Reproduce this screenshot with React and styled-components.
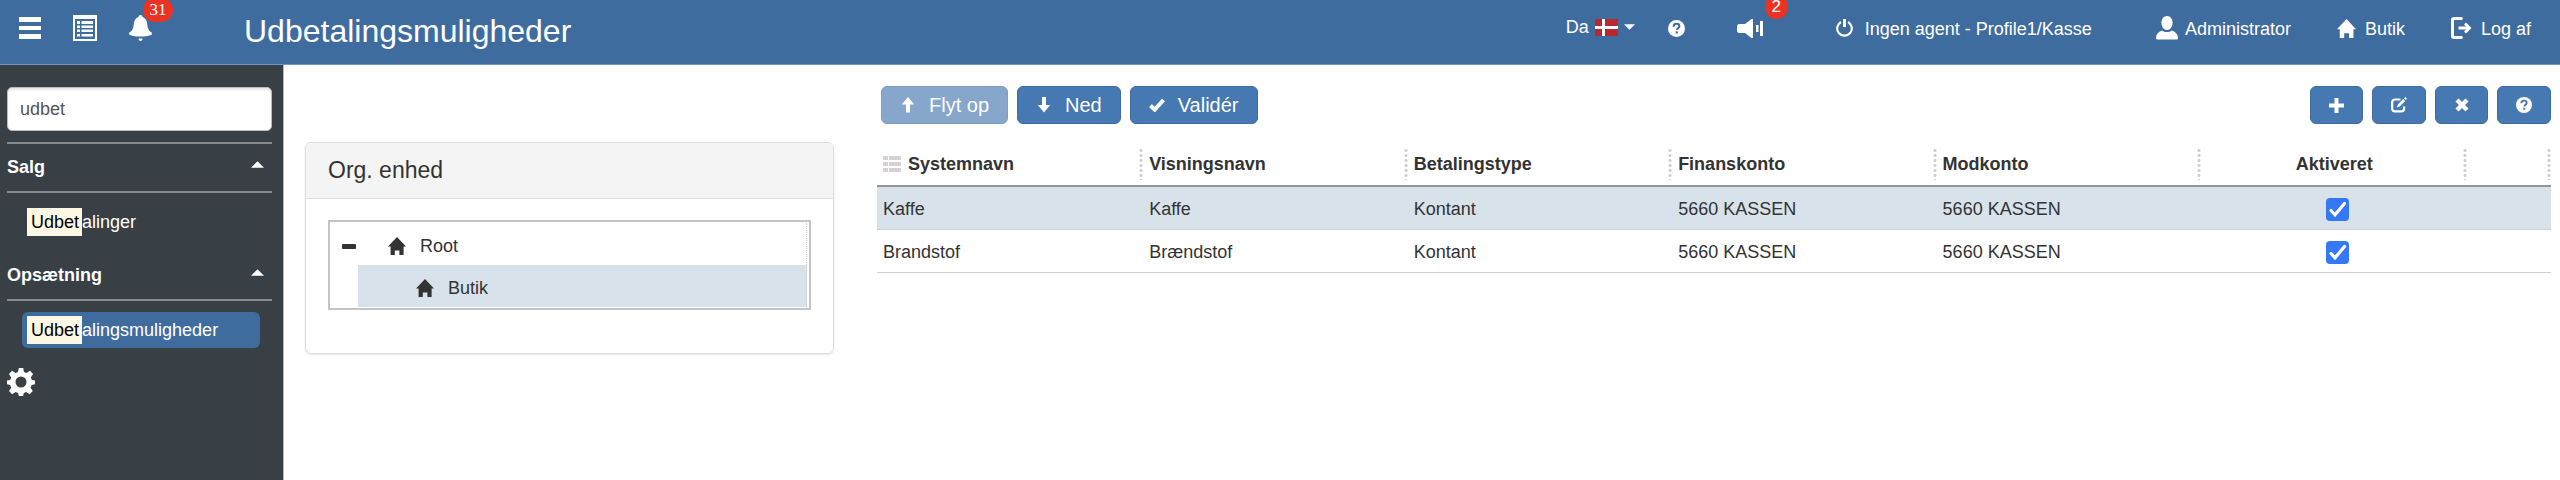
import React, { useState } from 'react';
import styled, { createGlobalStyle } from 'styled-components';

const GlobalStyle = createGlobalStyle`
  * {
    box-sizing: border-box;
  }

  body {
    margin: 0;
    background: #fff;
    color: #333;
    font-family: 'Liberation Sans', Arial, sans-serif;
    font-size: 18px;
    line-height: 24px;
  }

  button,
  input {
    font-family: inherit;
  }

  svg {
    display: block;
    flex: none;
  }
`;

const Page = styled.div`
  display: flex;
  flex-direction: column;
  min-height: 100vh;
`;

const Header = styled.header`
  display: flex;
  align-items: center;
  justify-content: space-between;
  height: 65px;
  padding: 0 29px 8px 19px;
  background: #3f6c9f;
  border-bottom: 1px solid #7297bd;
  color: #fff;
`;

const HeaderLeft = styled.div`
  display: flex;
  align-items: center;
`;

const Tools = styled.div`
  display: flex;
  align-items: center;
  gap: 32px;
  width: 225px;
`;

const IconButton = styled.button`
  position: relative;
  display: flex;
  align-items: center;
  padding: 0;
  border: 0;
  background: none;
  color: inherit;
  cursor: pointer;
`;

const Badge = styled.span`
  position: absolute;
  left: ${(props) => (props.$wide ? '14px' : '28px')};
  bottom: 19px;
  min-width: ${(props) => (props.$wide ? '30px' : '23px')};
  height: 24px;
  border-radius: 12px;
  background: #ea3323;
  font-family: ${(props) => (props.$wide ? "'Liberation Serif', serif" : 'inherit')};
  font-size: 17px;
  line-height: 24px;
  text-align: center;
`;

const Title = styled.h1`
  margin: 0;
  padding-top: 6px;
  font-size: 32px;
  font-weight: 400;
  line-height: 40px;
`;

const Nav = styled.nav`
  display: flex;
  align-items: center;
  gap: 46px;
`;

const NavGroup = styled.div`
  display: flex;
  align-items: center;
  gap: 52px;
  margin-right: 27px;
`;

const Language = styled.button`
  display: flex;
  align-items: center;
  gap: 6px;
  margin-right: -19px;
  padding: 0 0 2px;
  border: 0;
  background: none;
  color: inherit;
  font-size: 18px;
  line-height: 24px;
  cursor: pointer;
`;

const NavLink = styled.a`
  display: flex;
  align-items: center;
  gap: ${(props) => props.$gap || '9px'};
  margin-right: ${(props) => (props.$apart ? '18px' : '0')};
  color: inherit;
  text-decoration: none;

  span {
    padding-top: 2px;
  }
`;

const Body = styled.div`
  display: flex;
  flex: 1;
`;

const Sidebar = styled.aside`
  flex: none;
  width: 284px;
  padding: 22px 11px 22px 7px;
  background: #384045;
  border-right: 1px solid #b4b8ba;
  color: #fff;
`;

const Search = styled.input`
  display: block;
  width: 100%;
  height: 44px;
  margin-bottom: 11px;
  padding: 0 12px;
  border: 1px solid #bbb;
  border-radius: 5px;
  background: #fff;
  box-shadow: inset 0 2px 2px rgba(0, 0, 0, 0.1);
  color: #555;
  font-size: 18px;
`;

const MenuGroup = styled.section`
  & + & {
    margin-top: 11px;
  }
`;

const MenuHeading = styled.button`
  display: flex;
  align-items: center;
  justify-content: space-between;
  width: 100%;
  height: ${(props) => (props.$first ? '51px' : '50px')};
  padding: 0 8px 0 0;
  border: 0;
  border-top: ${(props) => (props.$first ? '2px solid #868a8c' : '0')};
  border-bottom: 2px solid #868a8c;
  background: none;
  color: #fff;
  font-size: 18px;
  font-weight: 700;
  cursor: pointer;

  svg {
    margin-bottom: 6px;
  }
`;

const MenuLink = styled.a`
  display: flex;
  align-items: center;
  height: 36px;
  margin: 11px 5px 0 15px;
  padding-left: 5px;
  border-radius: 6px;
  background: ${(props) => (props.$active ? '#3f6c9f' : 'transparent')};
  color: #fff;
  text-decoration: none;
`;

const MenuItems = styled.div`
  padding-right: 7px;
`;

const Match = styled.mark`
  padding: 2px 3px 2px 4px;
  background: #fcf8e3;
  color: #000;
`;

const Settings = styled(IconButton)`
  margin-top: 20px;
`;

const Main = styled.main`
  display: flex;
  flex: 1;
  align-items: flex-start;
  gap: 43px;
  min-width: 0;
  padding: 21px 9px 0 21px;
`;

const Panel = styled.section`
  flex: none;
  width: 529px;
  margin-top: 56px;
  border: 1px solid #ddd;
  border-radius: 6px;
  box-shadow: 0 1px 2px rgba(0, 0, 0, 0.1);
`;

const PanelTitle = styled.h2`
  margin: 0;
  padding: 13px 22px;
  border-bottom: 1px solid #ddd;
  border-radius: 6px 6px 0 0;
  background: #f4f4f4;
  font-size: 23px;
  font-weight: 400;
  line-height: 29px;
`;

const Tree = styled.ul`
  margin: 21px 22px 43px;
  padding: 1px 2px 1px 0;
  border: 2px solid #c4c4c4;
  list-style: none;

  ul {
    margin: 0;
    padding: 0 0 0 28px;
    list-style: none;
  }
`;

const TreeRow = styled.div`
  display: flex;
  align-items: center;
  gap: 14px;
  height: 42px;
  padding: 4px 0 0 ${(props) => (props.$child ? '58px' : '12px')};
  border-right: 1px dotted #ccc;
  background: ${(props) => (props.$selected ? '#d8e2eb' : 'transparent')};
`;

const Collapse = styled(IconButton)`
  margin-right: 18px;
`;

const Content = styled.section`
  flex: 1;
  min-width: 0;
`;

const Toolbar = styled.div`
  display: flex;
  justify-content: space-between;
  padding-left: 4px;
`;

const ButtonGroup = styled.div`
  display: flex;
  gap: 9px;
`;

const Button = styled.button`
  display: flex;
  align-items: center;
  justify-content: center;
  gap: 13px;
  min-width: 53px;
  height: 38px;
  padding: 0 18px;
  border: 1px solid #3f6c9f;
  border-radius: 6px;
  background: #4678b2;
  color: #fff;
  font-size: 20px;
  line-height: 24px;
  cursor: pointer;

  &:disabled {
    opacity: 0.65;
    cursor: default;
  }
`;

const Table = styled.table`
  width: 100%;
  margin-top: 19px;
  border-collapse: separate;
  border-spacing: 0;
  table-layout: fixed;
`;

const Th = styled.th`
  height: 44px;
  padding: 0;
  border-bottom: 2px solid #959595;
  text-align: left;
`;

const HeadCell = styled.div`
  display: flex;
  align-items: center;
  justify-content: ${(props) => (props.$center ? 'center' : 'flex-start')};
  gap: 7px;
  height: 32px;
  padding: 0 6px;
  background: radial-gradient(circle, #d2cccc 1px, transparent 2px) right top / 4px 5px repeat-y;
`;

const Row = styled.tr`
  background: ${(props) => (props.$selected ? '#d8e2eb' : '#fff')};
`;

const Td = styled.td`
  height: 43px;
  padding: 2px 0 0 6px;
  border-bottom: 1px solid #d3cfcf;
`;

const tick =
  "url(\"data:image/svg+xml,%3Csvg xmlns='http://www.w3.org/2000/svg' viewBox='0 0 23 23'%3E%3Cpath d='M5 12.5l4 4.3L18.5 5.5' fill='none' stroke='white' stroke-width='3.2' stroke-linecap='round'/%3E%3C/svg%3E\")";

const Checkbox = styled.input`
  display: block;
  width: 23px;
  height: 23px;
  margin: 0 auto;
  appearance: none;
  border: 1px solid #999;
  border-radius: 4px;
  background-color: #fff;

  &:checked {
    border: 0;
    background: #3478f6 ${tick} center / 100% 100%;
  }
`;

const Svg = ({ w, h, box, children }) => (
  <svg width={w} height={h} viewBox={box || `0 0 ${w} ${h}`} fill="currentColor" aria-hidden="true">
    {children}
  </svg>
);

const HomeIcon = ({ w = 18, h = 18 }) => (
  <Svg w={w} h={h} box="0 0 18 18">
    <path d="M9 0l9 9.6h-2.4V18h-4.2v-4.6H6.8V18H2.6V9.6H0z" />
  </Svg>
);

const CaretIcon = ({ up }) => (
  <Svg w={up ? 13 : 11} h={up ? 7 : 6} box="0 0 12 6">
    <path d={up ? 'M6 0l6 6H0z' : 'M0 0h12L6 6z'} />
  </Svg>
);

const HelpIcon = ({ size = 17, ink = '#3f6c9f' }) => (
  <Svg w={size} h={size} box="0 0 16 16">
    <circle cx="8" cy="8" r="8" />
    <path d="M5.3 6.3C5.3 4.5 6.4 3.6 8 3.6s2.7.9 2.7 2.3c0 1.9-2.3 1.9-2.3 3.5" fill="none" stroke={ink} strokeWidth="1.9" />
    <path d="M7.2 10.7h2.1v2H7.2z" fill={ink} />
  </Svg>
);

const MenuIcon = () => (
  <Svg w={22} h={22}>
    <path d="M0 0h22v5H0zM0 9h22v4H0zM0 17h22v5H0z" />
  </Svg>
);

const ListIcon = () => (
  <Svg w={24} h={26}>
    <path fillRule="evenodd" d="M0 0h24v26H0zM2 4v20h20V4z" />
    <path d="M4 6h3v3H4zM8.500 6H20v3H8.500zM4 10.500h3V13H4zM8.500 10.500H20V13H8.500zM4 14.500h3V17H4zM8.500 14.500H20V17H8.500zM4 19h3v2.500H4zM8.500 19H20v2.500H8.500z" />
  </Svg>
);

const BellIcon = () => (
  <Svg w={23} h={26}>
    <path d="M11.500 0c1.200 0 2 .8 2 2 3 1 4.500 4 4.800 7.500.3 4 1.200 6.200 4.200 8 1 .8.500 2-.5 2.500-6 2-15 2-21 0-1-.5-1.500-1.700-.5-2.500 3-1.800 3.900-4 4.200-8C5 6 6.500 3 9.500 2c0-1.200.8-2 2-2z" />
    <path d="M9.500 23.500h4c0 1.500-.8 2.500-2 2.500s-2-1-2-2.500z" />
  </Svg>
);

const FlagIcon = () => (
  <Svg w={23} h={17}>
    <path fill="#b9282f" d="M0 0h23v17H0z" />
    <path fill="#fff" d="M7 0h3v17H7zM0 7h23v3H0z" />
  </Svg>
);

const HornIcon = () => (
  <Svg w={26} h={19}>
    <path d="M1.500 5H8l6.500-5H16v19h-1.500L8 14H1.500L0 12.500v-6zM19 6h2.500v7H19zM23 2h3v15h-3z" />
  </Svg>
);

const PowerIcon = () => (
  <Svg w={17} h={18}>
    <path d="M5 3a7.300 7.300 0 1 0 7 0" fill="none" stroke="currentColor" strokeWidth="2.200" />
    <path d="M7 0h3v8H7z" />
  </Svg>
);

const UserIcon = () => (
  <Svg w={22} h={24}>
    <path d="M11 0c3.400 0 5.600 2.900 5.600 6.800S14.400 14 11 14 5.400 10.700 5.400 6.800 7.600 0 11 0z" />
    <path d="M6 14.500c3 2 7 2 10 0 3.800 1.500 6 4 6 7.500 0 1-.6 1.500-1.500 1.500h-19C.6 23.500 0 23 0 22c0-3.500 2.200-6 6-7.500z" />
  </Svg>
);

const LogoutIcon = () => (
  <Svg w={21} h={22}>
    <path d="M11.500 1.500H3C2 1.500 1.500 2 1.500 3v16c0 1 .5 1.500 1.500 1.500h8.500" fill="none" stroke="currentColor" strokeWidth="3" />
    <path d="M7.500 11H18M14 6.500l4.500 4.500-4.500 4.500" fill="none" stroke="currentColor" strokeWidth="2.800" />
  </Svg>
);

const GearIcon = () => (
  <Svg w={28} h={28}>
    <path
      fillRule="evenodd"
      d="M11.800 0h4.400l.8 4 2.600 1.100 3.400-2.300 3.100 3.100-2.300 3.500L24.900 12l3.100.6v3.700l-3.300.7-1.100 2.700 2.200 3.400-3.100 3.100-3.400-2.200-2.500 1.100-.7 2.900h-4.300l-.7-2.900-2.500-1.100-3.500 2.200L2 23.100l2.200-3.400L3.100 17 0 16.300v-3.700l3.100-.6 1.100-2.600L2 5.900l3.100-3.100 3.500 2.300L11 4zM14 8.500a5.500 5.500 0 1 0 0 11 5.500 5.500 0 0 0 0-11z"
    />
  </Svg>
);

const MinusIcon = () => (
  <Svg w={14} h={5}>
    <rect width="14" height="5" rx="1" />
  </Svg>
);

const ArrowIcon = ({ down }) => (
  <Svg w={16} h={16}>
    <path d={down ? 'M6 0h4v8h4.200L8 15.500 1.800 8H6z' : 'M8 0l6.200 7.500H10v8H6v-8H1.800z'} />
  </Svg>
);

const CheckIcon = () => (
  <Svg w={16} h={14}>
    <path d="M1.500 7.500l4.200 4.200L14.500 2" fill="none" stroke="currentColor" strokeWidth="4" />
  </Svg>
);

const PlusIcon = () => (
  <Svg w={15} h={15}>
    <path d="M5.500 0h4v5.500H15v4H9.500V15h-4V9.500H0v-4h5.500z" />
  </Svg>
);

const EditIcon = () => (
  <Svg w={16} h={16}>
    <path d="M9.500 2.500H4C2.200 2.500 1.200 3.500 1.200 5.200v6.300c0 1.800 1 2.800 2.800 2.800h6.300c1.800 0 2.800-1 2.800-2.800V9.500" fill="none" stroke="currentColor" strokeWidth="2.200" />
    <path d="M6 10.500l.8-3L12.200 2l2 2-5.400 5.500zM13 1.200L14.200 0 16 1.800 14.900 3z" />
  </Svg>
);

const CrossIcon = () => (
  <Svg w={14} h={14}>
    <path d="M2 2l10 10M12 2L2 12" fill="none" stroke="currentColor" strokeWidth="4.400" />
  </Svg>
);

const GridIcon = () => (
  <Svg w={18} h={16}>
    <path fill="#d6d0d0" d="M0 0h5v4H0zM6 0h12v4H6zM0 6h5v4H0zM6 6h12v4H6zM0 12h5v4H0zM6 12h12v4H6z" />
  </Svg>
);

const columns = ['Systemnavn', 'Visningsnavn', 'Betalingstype', 'Finanskonto', 'Modkonto', 'Aktiveret', ''];
const columnWidths = ['15.9%', '15.8%', '15.8%', '15.8%', '15.8%', '15.9%', '5%'];

const initialRows = [
  { cells: ['Kaffe', 'Kaffe', 'Kontant', '5660 KASSEN', '5660 KASSEN'], active: true },
  { cells: ['Brandstof', 'Brændstof', 'Kontant', '5660 KASSEN', '5660 KASSEN'], active: true },
];

function App() {
  const [query, setQuery] = useState('udbet');
  const [rows, setRows] = useState(initialRows);

  const toggle = (index) =>
    setRows(rows.map((row, i) => (i === index ? { ...row, active: !row.active } : row)));

  return (
    <Page>
      <GlobalStyle />
      <Header>
        <HeaderLeft>
          <Tools>
            <IconButton aria-label="Menu"><MenuIcon /></IconButton>
            <IconButton aria-label="Liste"><ListIcon /></IconButton>
            <IconButton aria-label="Notifikationer">
              <BellIcon />
              <Badge $wide>31</Badge>
            </IconButton>
          </Tools>
          <Title>Udbetalingsmuligheder</Title>
        </HeaderLeft>
        <Nav>
          <NavGroup>
            <Language>
              Da <FlagIcon /> <CaretIcon />
            </Language>
            <IconButton aria-label="Hjælp"><HelpIcon /></IconButton>
            <IconButton aria-label="Nyheder">
              <HornIcon />
              <Badge>2</Badge>
            </IconButton>
          </NavGroup>
          <NavLink href="#agent" $gap="12px" $apart><PowerIcon /><span>Ingen agent - Profile1/Kasse</span></NavLink>
          <NavLink href="#profil" $gap="7px"><UserIcon /><span>Administrator</span></NavLink>
          <NavLink href="#butik"><HomeIcon w={19} h={21} /><span>Butik</span></NavLink>
          <NavLink href="#logaf"><LogoutIcon /><span>Log af</span></NavLink>
        </Nav>
      </Header>
      <Body>
        <Sidebar>
          <Search aria-label="Søg" value={query} onChange={(e) => setQuery(e.target.value)} />
          <MenuGroup>
            <MenuHeading $first>Salg <CaretIcon up /></MenuHeading>
            <MenuItems>
              <MenuLink href="#udbetalinger"><Match>Udbet</Match>alinger</MenuLink>
            </MenuItems>
          </MenuGroup>
          <MenuGroup>
            <MenuHeading>Opsætning <CaretIcon up /></MenuHeading>
            <MenuItems>
              <MenuLink href="#udbetalingsmuligheder" $active><Match>Udbet</Match>alingsmuligheder</MenuLink>
            </MenuItems>
          </MenuGroup>
          <Settings aria-label="Indstillinger"><GearIcon /></Settings>
        </Sidebar>
        <Main>
          <Panel>
            <PanelTitle>Org. enhed</PanelTitle>
            <Tree>
              <li>
                <TreeRow>
                  <Collapse aria-label="Fold sammen"><MinusIcon /></Collapse>
                  <HomeIcon /> Root
                </TreeRow>
                <ul>
                  <li>
                    <TreeRow $child $selected><HomeIcon /> Butik</TreeRow>
                  </li>
                </ul>
              </li>
            </Tree>
          </Panel>
          <Content>
            <Toolbar>
              <ButtonGroup>
                <Button disabled><ArrowIcon /> Flyt op</Button>
                <Button><ArrowIcon down /> Ned</Button>
                <Button><CheckIcon /> Validér</Button>
              </ButtonGroup>
              <ButtonGroup>
                <Button aria-label="Tilføj"><PlusIcon /></Button>
                <Button aria-label="Rediger"><EditIcon /></Button>
                <Button aria-label="Slet"><CrossIcon /></Button>
                <Button aria-label="Hjælp"><HelpIcon size={16} ink="#4678b2" /></Button>
              </ButtonGroup>
            </Toolbar>
            <Table>
              <colgroup>
                {columnWidths.map((width, i) => (
                  <col key={i} width={width} />
                ))}
              </colgroup>
              <thead>
                <tr>
                  {columns.map((name, i) => (
                    <Th key={i}>
                      <HeadCell $center={i === 5}>
                        {i === 0 && <GridIcon />}
                        {name}
                      </HeadCell>
                    </Th>
                  ))}
                </tr>
              </thead>
              <tbody>
                {rows.map((row, i) => (
                  <Row key={i} $selected={i === 0}>
                    {row.cells.map((cell, j) => (
                      <Td key={j}>{cell}</Td>
                    ))}
                    <Td>
                      <Checkbox
                        type="checkbox"
                        aria-label={`${row.cells[0]} aktiveret`}
                        checked={row.active}
                        onChange={() => toggle(i)}
                      />
                    </Td>
                    <Td />
                  </Row>
                ))}
              </tbody>
            </Table>
          </Content>
        </Main>
      </Body>
    </Page>
  );
}

export default App;
